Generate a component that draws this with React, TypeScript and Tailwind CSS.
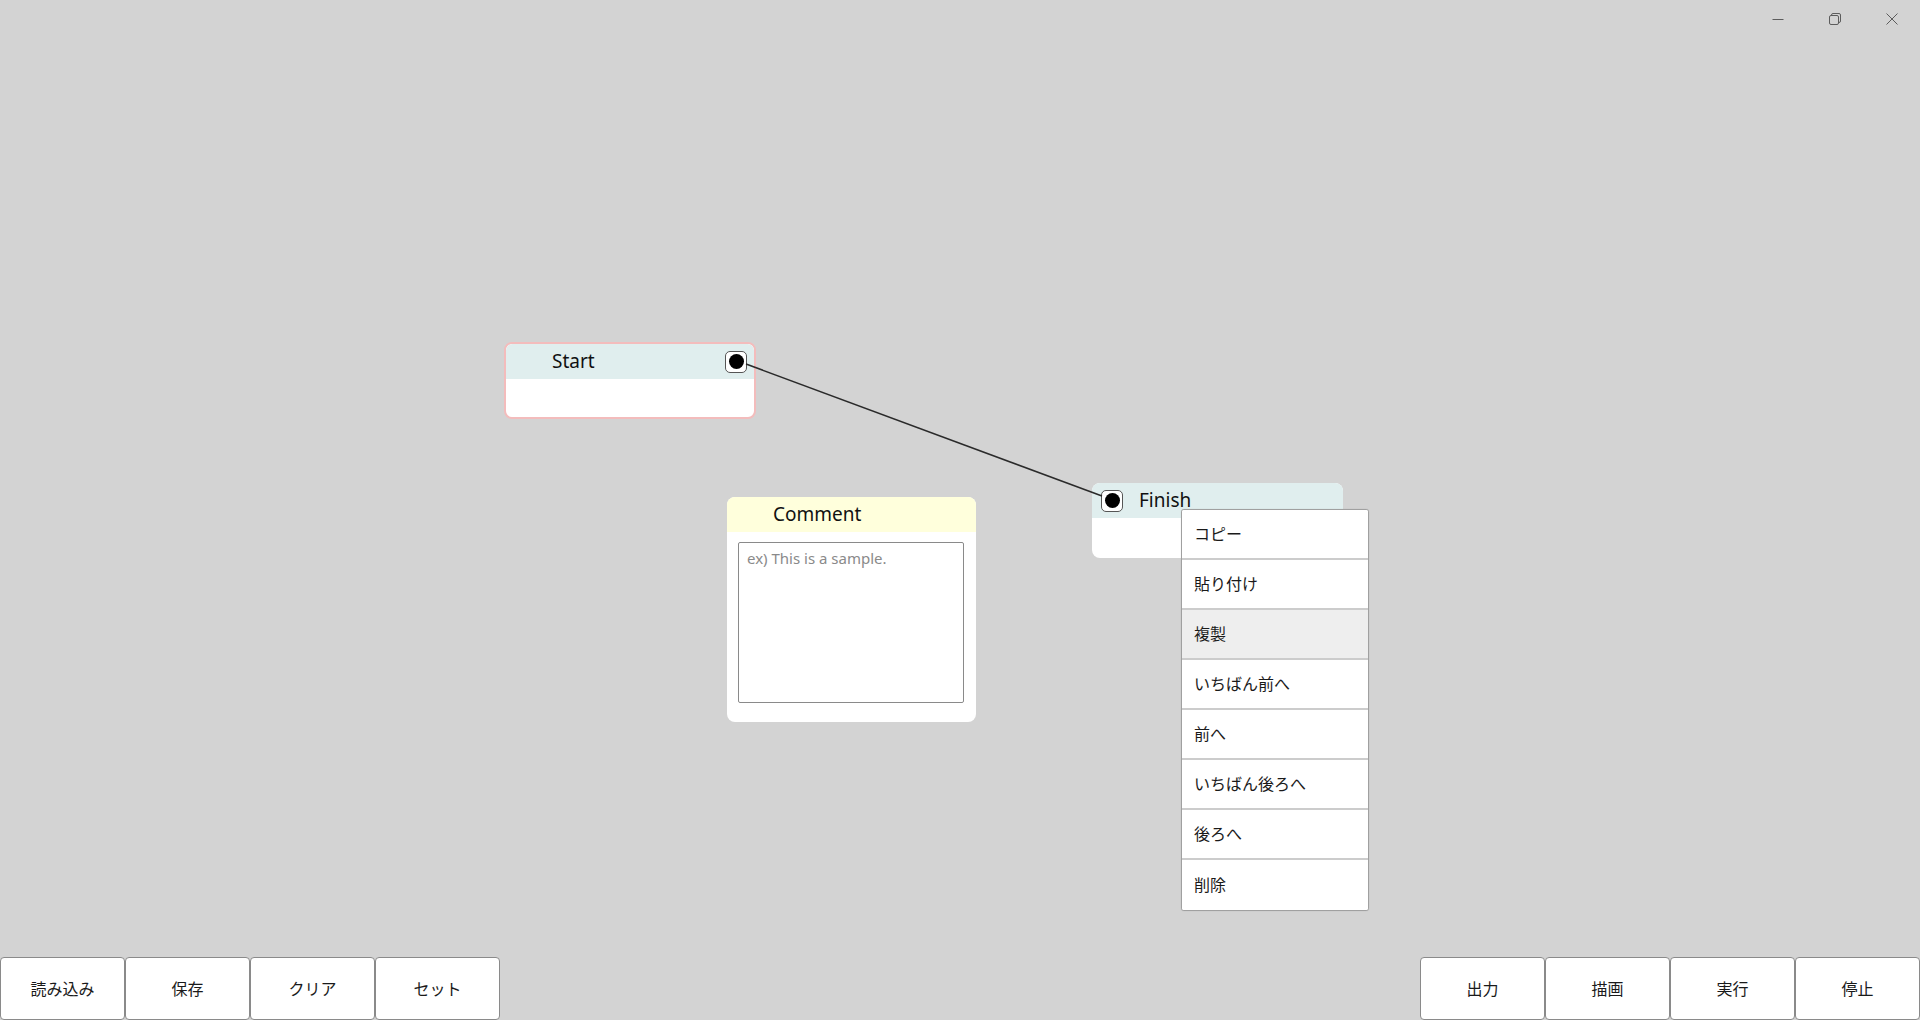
import React from "react";

const font = { fontFamily: '"Noto Sans", "Noto Sans CJK JP", sans-serif' };

const menuItems = [
  "コピー",
  "貼り付け",
  "複製",
  "いちばん前へ",
  "前へ",
  "いちばん後ろへ",
  "後ろへ",
  "削除",
];

const leftButtons = ["読み込み", "保存", "クリア", "セット"];
const rightButtons = ["出力", "描画", "実行", "停止"];

const Port = () => (
  <div className="w-[22px] h-[22px] rounded-[5px] border-[1.5px] border-[#555] bg-white flex items-center justify-center shrink-0">
    <div className="w-[15px] h-[15px] rounded-full bg-black" />
  </div>
);

const WindowControls = () => (
  <div className="flex justify-end h-[38px]">
    <div className="w-[57px] h-full flex items-center justify-center">
      <svg width="12" height="12" viewBox="0 0 12 12">
        <path d="M0.5 6.5 H11.5" stroke="#5c5c5c" strokeWidth="1" />
      </svg>
    </div>
    <div className="w-[57px] h-full flex items-center justify-center">
      <svg width="12" height="12" viewBox="0 0 12 12" fill="none">
        <rect x="0.5" y="2.5" width="9" height="9" rx="1.5" stroke="#5c5c5c" strokeWidth="1" />
        <path d="M2.5 2.5 V2 A1.5 1.5 0 0 1 4 0.5 H10 A1.5 1.5 0 0 1 11.5 2 V8 A1.5 1.5 0 0 1 10 9.5 H9.5" stroke="#5c5c5c" strokeWidth="1" />
      </svg>
    </div>
    <div className="w-[57px] h-full flex items-center justify-center">
      <svg width="12" height="12" viewBox="0 0 12 12">
        <path d="M0.5 0.5 L11.5 11.5 M11.5 0.5 L0.5 11.5" stroke="#5c5c5c" strokeWidth="1" />
      </svg>
    </div>
  </div>
);

const ToolButton = ({ label }: { label: string }) => (
  <button className="w-[125px] h-full bg-white border border-[#8a8a8a] rounded-[4px] text-[16px] text-[#1a1a1a]">
    {label}
  </button>
);

export default function App() {
  return (
    <div className="w-full h-[1020px] bg-[#d3d3d3] flex flex-col overflow-hidden" style={font}>
      <WindowControls />

      <div className="flex-1 relative">
        {/* Start node */}
        <div className="absolute left-[504px] top-[304px] w-[252px] h-[77px] rounded-[8px] border-2 border-[#f3bcbc] bg-white overflow-hidden">
          <div className="h-[35px] bg-[#e0eeee] rounded-t-[6px] flex items-center pl-[46px] pr-[7px]">
            <span className="text-[19px] text-[#111]">Start</span>
            <div className="ml-auto">
              <Port />
            </div>
          </div>
        </div>

        {/* Comment node */}
        <div className="absolute left-[727px] top-[459px] w-[249px] h-[225px] rounded-[8px] bg-white overflow-hidden flex flex-col">
          <div className="h-[35px] bg-[#ffffdc] flex items-center pl-[46px] shrink-0">
            <span className="text-[19px] text-[#111]">Comment</span>
          </div>
          <div className="px-[11px] pt-[10px]">
            <textarea
              className="w-[226px] h-[161px] border border-[#8a8a8a] rounded-[2px] resize-none px-[8px] py-[4px] text-[15px] outline-none placeholder:text-[#8a8a8a]"
              placeholder="ex) This is a sample."
            />
          </div>
        </div>

        {/* Finish node */}
        <div className="absolute left-[1092px] top-[445px] w-[251px] h-[75px] rounded-[8px] bg-white overflow-hidden">
          <div className="h-[35px] bg-[#e0eeee] flex items-center pl-[9px] gap-[16px]">
            <Port />
            <span className="text-[19px] text-[#111]">Finish</span>
          </div>
        </div>

        {/* Connection between ports */}
        <svg className="absolute inset-0 w-full h-full pointer-events-none">
          <line x1="746" y1="326" x2="1102" y2="458" stroke="#2a2a2a" strokeWidth="1.5" />
        </svg>

        {/* Context menu */}
        <div className="absolute left-[1181px] top-[471px] w-[188px] bg-white border border-[#a0a0a0] rounded-[3px] overflow-hidden shadow-[0_0_1px_rgba(0,0,0,0.2)]">
          {menuItems.map((item, i) => (
            <div
              key={item}
              className={`h-[50px] flex items-center pl-[12px] text-[16px] text-[#1a1a1a] ${
                i < menuItems.length - 1 ? "border-b-2 border-[#cccccc]" : ""
              } ${item === "複製" ? "bg-[#eeeeee]" : "bg-white"}`}
            >
              {item}
            </div>
          ))}
        </div>
      </div>

      <div className="h-[63px] flex justify-between shrink-0">
        <div className="flex h-full">
          {leftButtons.map((b) => (
            <ToolButton key={b} label={b} />
          ))}
        </div>
        <div className="flex h-full">
          {rightButtons.map((b) => (
            <ToolButton key={b} label={b} />
          ))}
        </div>
      </div>
    </div>
  );
}
